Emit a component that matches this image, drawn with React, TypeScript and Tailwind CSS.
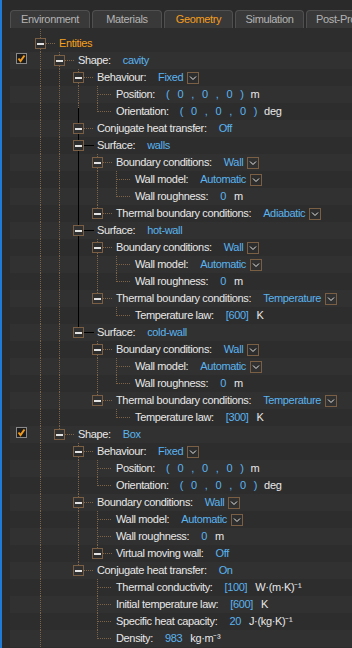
import React from "react";

type Val =
  | { t: "text"; v: string }
  | { t: "drop"; v: string }
  | { t: "vec"; unit: string }
  | { t: "num"; v: string; unit: string };

type Node = {
  label: string;
  val?: Val;
  kids?: Node[];
  box?: boolean;
  check?: boolean;
  orange?: boolean;
};

const text = (v: string): Val => ({ t: "text", v });
const drop = (v: string): Val => ({ t: "drop", v });
const vec = (unit: string): Val => ({ t: "vec", unit });
const num = (v: string, unit: string): Val => ({ t: "num", v, unit });

const behaviour = (): Node => ({
  label: "Behaviour:",
  val: drop("Fixed"),
  box: true,
  kids: [
    { label: "Position:", val: vec("m") },
    { label: "Orientation:", val: vec("deg") },
  ],
});

const wallKids = (): Node[] => [
  { label: "Wall model:", val: drop("Automatic") },
  { label: "Wall roughness:", val: num("0", "m") },
];

const surface = (name: string, thermal: Node): Node => ({
  label: "Surface:",
  val: text(name),
  box: true,
  kids: [
    { label: "Boundary conditions:", val: drop("Wall"), box: true, kids: wallKids() },
    thermal,
  ],
});

const tempThermal = (t: string): Node => ({
  label: "Thermal boundary conditions:",
  val: drop("Temperature"),
  box: true,
  kids: [{ label: "Temperature law:", val: num(t, "K") }],
});

const tree: Node = {
  label: "Entities",
  orange: true,
  box: true,
  kids: [
    {
      label: "Shape:",
      val: text("cavity"),
      box: true,
      check: true,
      kids: [
        behaviour(),
        { label: "Conjugate heat transfer:", val: text("Off"), box: true },
        surface("walls", { label: "Thermal boundary conditions:", val: drop("Adiabatic"), box: true }),
        surface("hot-wall", tempThermal("[600]")),
        surface("cold-wall", tempThermal("[300]")),
      ],
    },
    {
      label: "Shape:",
      val: text("Box"),
      box: true,
      check: true,
      kids: [
        behaviour(),
        {
          label: "Boundary conditions:",
          val: drop("Wall"),
          box: true,
          kids: [...wallKids(), { label: "Virtual moving wall:", val: text("Off"), box: true }],
        },
        {
          label: "Conjugate heat transfer:",
          val: text("On"),
          box: true,
          kids: [
            { label: "Thermal conductivity:", val: num("[100]", "W·(m·K)⁻¹") },
            { label: "Initial temperature law:", val: num("[600]", "K") },
            { label: "Specific heat capacity:", val: num("20", "J·(kg·K)⁻¹") },
            { label: "Density:", val: num("983", "kg·m⁻³") },
          ],
        },
      ],
    },
  ],
};

type Row = { node: Node; depth: number; hasNext: boolean; anc: boolean[] };

function flatten(n: Node, depth: number, hasNext: boolean, anc: boolean[], out: Row[]) {
  out.push({ node: n, depth, hasNext, anc });
  const kids = n.kids ?? [];
  kids.forEach((k, i) => flatten(k, depth + 1, i < kids.length - 1, [...anc, hasNext], out));
}

const rows: Row[] = [];
flatten(tree, 0, true, [], rows);

const DOT = "#7d6347";
const FONT = { fontFamily: '"Liberation Sans", Arial, sans-serif' };

type Seg = { x1: number; y1: number; x2: number; y2: number; black?: boolean };

function Guides({ row, idx }: { row: Row; idx: number }) {
  const d = row.depth;
  const col = (k: number) => 10.5 + 19 * k;
  const segs: Seg[] = [];
  const blackCol2 = idx >= 5 && idx <= 17;
  for (let k = 0; k < d; k++) {
    if (k === 0 || row.anc[k]) {
      const x = col(k);
      if (k === 2 && idx === 4) {
        segs.push({ x1: x, y1: 0, x2: x, y2: 5 });
        segs.push({ x1: x, y1: 5, x2: x, y2: 17, black: true });
      } else {
        segs.push({ x1: x, y1: 0, x2: x, y2: 17, black: k === 2 && blackCol2 });
      }
    }
  }
  const c = col(d);
  const ownBlack = d === 2 && blackCol2;
  const hBlack = idx === 6 || idx === 11 || idx === 17;
  if (row.node.box) {
    segs.push({ x1: c, y1: 0, x2: c, y2: 3, black: ownBlack });
    if (row.hasNext) segs.push({ x1: c, y1: 14, x2: c, y2: 17, black: ownBlack });
    segs.push({ x1: 16 + 19 * d, y1: 8.5, x2: 26 + 19 * d, y2: 8.5, black: hBlack });
  } else {
    segs.push({ x1: c, y1: 0, x2: c, y2: row.hasNext ? 17 : 9, black: ownBlack });
    segs.push({ x1: 11 + 19 * d, y1: 8.5, x2: 24 + 19 * d, y2: 8.5 });
  }
  return (
    <svg width={29 + 19 * d} height={17} className="shrink-0 block">
      {segs.map((s, i) => (
        <line
          key={i}
          x1={s.x1}
          y1={s.y1}
          x2={s.x2}
          y2={s.y2}
          stroke={s.black ? "#000000" : DOT}
          strokeWidth={1}
          strokeDasharray={s.black ? undefined : "1 1"}
          shapeRendering="crispEdges"
        />
      ))}
      {row.node.box && (
        <g shapeRendering="crispEdges">
          <rect x={5.5 + 19 * d} y={3.5} width={10} height={10} fill="none" stroke="#7a5f44" />
          <rect x={7 + 19 * d} y={8} width={7} height={2} fill="#e2e2e2" />
        </g>
      )}
    </svg>
  );
}

function CheckBox() {
  return (
    <svg width={11} height={11} className="block">
      <rect x={0.5} y={0.5} width={10} height={10} fill="#1c1c1c" stroke="#8a8a8a" shapeRendering="crispEdges" />
      <polyline points="2.5,5.5 4.5,8 8.5,2.5" fill="none" stroke="#f29a1c" strokeWidth={2} />
    </svg>
  );
}

function DropBox() {
  return (
    <svg width={12} height={12} className="block ml-[4px] shrink-0">
      <rect x={0.5} y={0.5} width={11} height={11} fill="none" stroke="#7a5f44" shapeRendering="crispEdges" />
      <polyline points="3,4.5 6,7.5 9,4.5" fill="none" stroke="#e6e6e6" strokeWidth={1} />
    </svg>
  );
}

function Value({ val }: { val: Val }) {
  const blue = "text-[#5ab4f0]";
  if (val.t === "text") return <span className={`ml-[12px] ${blue}`}>{val.v}</span>;
  if (val.t === "drop")
    return (
      <span className="ml-[12px] flex items-center">
        <span className={blue}>{val.v}</span>
        <DropBox />
      </span>
    );
  if (val.t === "vec")
    return (
      <span className="ml-[11px] flex items-center">
        <span className={`flex gap-[8px] ${blue}`}>
          <span>(</span>
          <span>0</span>
          <span>,</span>
          <span>0</span>
          <span>,</span>
          <span>0</span>
          <span>)</span>
        </span>
        <span className="ml-[7px] text-[#e8e8e8]">{val.unit}</span>
      </span>
    );
  return (
    <span className="ml-[12px] flex items-center">
      <span className={blue}>{val.v}</span>
      <span className="ml-[8px] text-[#e8e8e8]">{val.unit}</span>
    </span>
  );
}

const tabs = [
  { name: "Environment", cls: "w-[80px] justify-center" },
  { name: "Materials", cls: "w-[70px] justify-center" },
  { name: "Geometry", cls: "w-[69px] justify-center", active: true },
  { name: "Simulation", cls: "w-[69px] justify-center" },
  { name: "Post-Processing", cls: "w-[100px] justify-start pl-[9px]" },
];

export default function App() {
  return (
    <div
      className="w-[352px] h-[648px] overflow-hidden flex bg-[#2a2a2a] text-[11px] leading-[17px] tracking-[-0.35px] select-none"
      style={FONT}
    >
      <div className="w-[10px] shrink-0 border-l-2 border-[#1f7ad6] bg-[#2a2a2a]" />
      <div className="flex-1 min-w-0 flex flex-col">
        <div className="h-[28px] shrink-0 flex items-end gap-[2px] bg-[#2a2a2a] whitespace-nowrap">
          {tabs.map((t) => (
            <div
              key={t.name}
              className={`${t.cls} shrink-0 h-[18px] flex items-center overflow-hidden rounded-t-[4px] border border-b-0 border-[#505050] bg-[#393939] ${
                t.active ? "text-[#f59d1d]" : "text-[#b4b4b4]"
              }`}
            >
              {t.name}
            </div>
          ))}
        </div>
        <div className="flex-1 bg-[#2d2d2d]">
          <div className="h-[7px] flex">
            <div className="w-[20px] shrink-0" />
            <svg width={29} height={7} className="block">
              <line x1={10.5} y1={1} x2={10.5} y2={7} stroke={DOT} strokeDasharray="1 1" shapeRendering="crispEdges" />
            </svg>
          </div>
          {rows.map((r, i) => (
            <div
              key={i}
              className={`h-[17px] flex items-center whitespace-nowrap ${i % 2 ? "bg-[#313131]" : "bg-[#2d2d2d]"}`}
            >
              <div className="w-[20px] h-full shrink-0 pl-[6px] pt-[1px]">{r.node.check && <CheckBox />}</div>
              <Guides row={r} idx={i} />
              <span className={r.node.orange ? "text-[#f5a11f]" : "text-[#e8e8e8]"}>{r.node.label}</span>
              {r.node.val && <Value val={r.node.val} />}
            </div>
          ))}
        </div>
      </div>
    </div>
  );
}
